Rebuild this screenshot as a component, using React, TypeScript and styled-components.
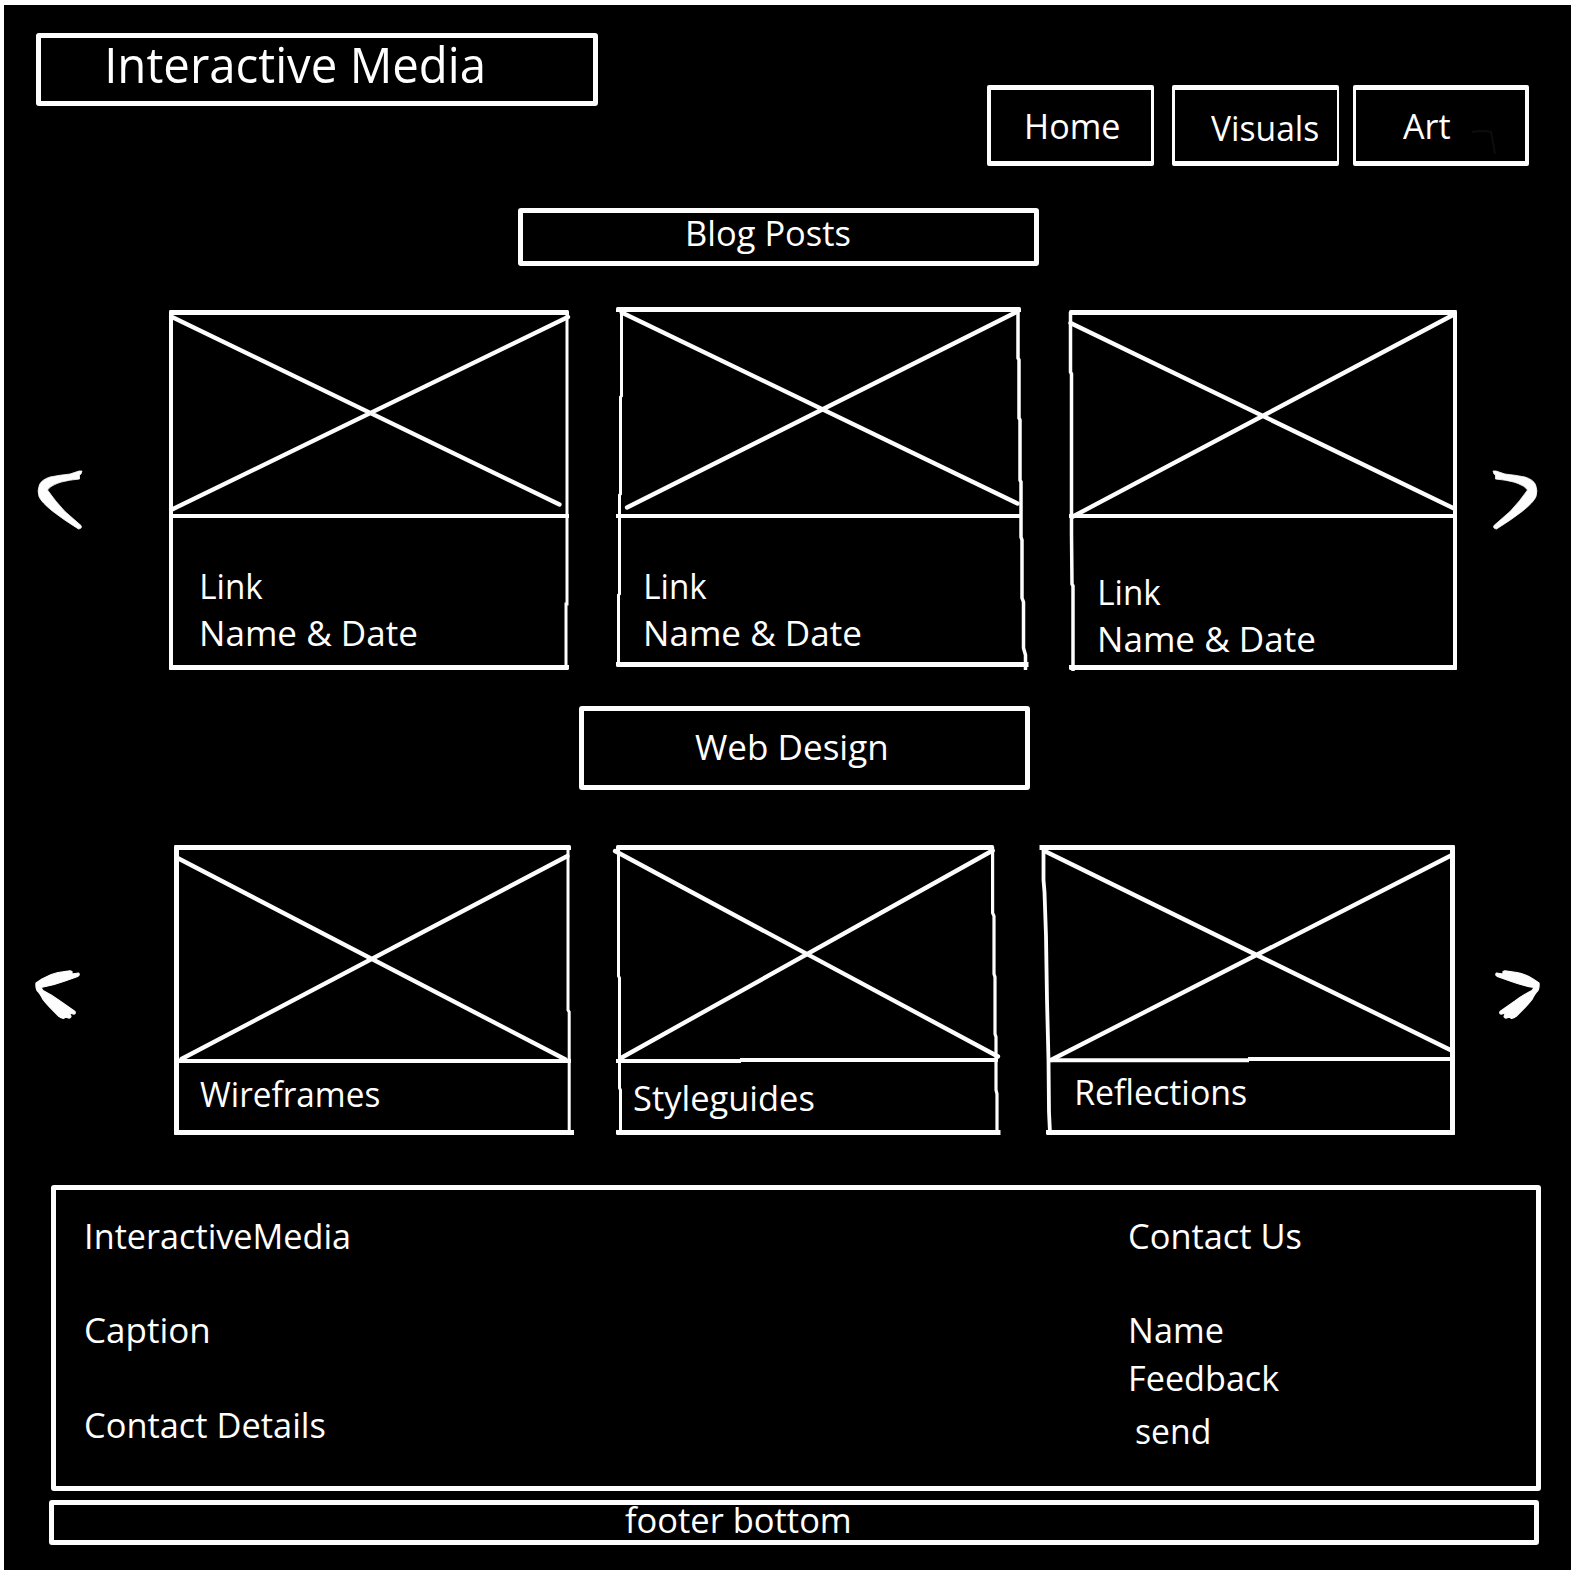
import React, { useLayoutEffect, useState } from 'react';
import styled, { createGlobalStyle } from 'styled-components';

const FONT = '"Open Sans", "Noto Sans", sans-serif';
const INK = '#fdfdfd';

const GlobalStyle = createGlobalStyle`
  *, *::before, *::after { box-sizing: border-box; }
  html, body { margin: 0; background: #fff; }
  body { padding: 5px 4px; }
`;

const Page = styled.main`
  display: flex;
  flex-direction: column;
  width: 1567px;
  height: 1565px;
  background: #000;
  color: #fff;
  font-family: ${FONT};
`;

/* ---------- text ---------- */

const LabelBox = styled.span<{ $width: number; $size: number }>`
  display: block;
  flex: none;
  width: ${(p) => p.$width}px;
  height: ${(p) => p.$size * 1.335}px;
  font-size: ${(p) => p.$size}px;
  line-height: ${(p) => p.$size * 1.335}px;
  white-space: nowrap;
`;

const LabelText = styled.span`
  display: inline-block;
  transform-origin: 0 50%;
`;

type LabelProps = { children: string; width: number; size?: number };

/** One line of lettering condensed so that its ink fills the given width. */
function Label({ children, width, size = 35.5 }: LabelProps) {
  const [transform, setTransform] = useState('none');
  useLayoutEffect(() => {
    const ctx = document.createElement('canvas').getContext('2d');
    if (!ctx) return;
    ctx.font = `${size}px ${FONT}`;
    const m = ctx.measureText(children);
    const scale = width / (m.actualBoundingBoxLeft + m.actualBoundingBoxRight);
    setTransform(`translateX(${m.actualBoundingBoxLeft * scale}px) scaleX(${scale})`);
  }, [children, width, size]);
  return (
    <LabelBox $width={width} $size={size}>
      <LabelText style={{ transform }}>{children}</LabelText>
    </LabelBox>
  );
}

/* ---------- header ---------- */

const Header = styled.header`
  display: flex;
  justify-content: space-between;
  align-items: flex-start;
  height: 203px;
  padding: 28px 42px 0 31.500px;
`;

const Brand = styled.h1`
  display: flex;
  width: 562px;
  height: 73px;
  margin: 0;
  padding: 0 0 0 67px;
  border: 5px solid ${INK};
  border-radius: 3px;
  font-weight: 400;
  & > span { margin-top: -6px; }
`;

const Nav = styled.nav`
  display: flex;
  margin-top: 52px;
`;

const NavItem = styled.a<{ $width: number; $gap?: number; $sides: [number, number]; $pad: [number, number] }>`
  display: flex;
  width: ${(p) => p.$width}px;
  height: 81px;
  margin-left: ${(p) => p.$gap ?? 0}px;
  padding: ${(p) => p.$pad[0]}px 0 0 ${(p) => p.$pad[1]}px;
  border: solid ${INK};
  border-width: 5px ${(p) => p.$sides[1]}px 5px ${(p) => p.$sides[0]}px;
  border-radius: 2px;
  color: inherit;
  text-decoration: none;
`;

const Smudge = styled.svg`
  flex: none;
  overflow: visible;
  fill: none;
  stroke: #0d0d0d;
  stroke-width: 2;
`;

/* ---------- sections ---------- */

const SectionTitle = styled.h2<{ $left: number; $width: number; $height: number; $offset: [number, number] }>`
  display: flex;
  flex: none;
  width: ${(p) => p.$width}px;
  height: ${(p) => p.$height}px;
  margin: 0 0 0 ${(p) => p.$left}px;
  border: 5px solid ${INK};
  border-radius: 3px;
  font-weight: 400;
  & > span { margin: ${(p) => p.$offset[0]}px 0 0 ${(p) => p.$offset[1]}px; }
`;

const Carousel = styled.section<{ $height: number; $top: number; $bottom: number }>`
  display: flex;
  flex: none;
  align-items: flex-start;
  height: ${(p) => p.$height}px;
  margin: ${(p) => p.$top}px 0 ${(p) => p.$bottom}px;
`;

const ArrowButton = styled.button<{ $gap: number; $drop: number; $flip?: boolean }>`
  display: block;
  flex: none;
  margin: ${(p) => p.$drop}px 0 0 ${(p) => p.$gap}px;
  padding: 0;
  border: 0;
  background: none;
  transform: ${(p) => (p.$flip ? 'scaleX(-1)' : 'none')};
  svg { display: block; overflow: visible; fill: ${INK}; stroke: ${INK}; stroke-linejoin: round; }
`;

const CardBox = styled.article<{ $gap: number; $drop: number; $width: number; $sides: [number, number] }>`
  position: relative;
  flex: none;
  width: ${(p) => p.$width}px;
  margin: ${(p) => p.$drop}px 0 0 ${(p) => p.$gap}px;
  border: solid ${INK};
  border-width: 5px ${(p) => p.$sides[1]}px 5px ${(p) => p.$sides[0]}px;
  border-radius: 1.500px;
`;

const Thumb = styled.div<{ $height: number }>`
  height: ${(p) => p.$height}px;
`;

const Caption = styled.div<{ $height: number; $pad: [number, number]; $line: string }>`
  display: flex;
  height: ${(p) => p.$height + 4}px;
  flex-direction: column;
  padding: ${(p) => p.$pad[0]}px 0 0 ${(p) => p.$pad[1]}px;
  border-top: 4px solid ${(p) => p.$line};
`;

/* Pen strokes that cross the card's straight borders. */
const Strokes = styled.svg<{ $left: number; $top: number }>`
  position: absolute;
  left: ${(p) => p.$left}px;
  top: ${(p) => p.$top}px;
  overflow: visible;
  fill: none;
  stroke: ${INK};
  pointer-events: none;
`;

type Stroke = { d: string; w: number };

type CardData = {
  x: number;
  y: number;
  width: number;
  gap: number;
  drop: number;
  sides: [number, number];
  thumb: number;
  caption: number;
  pad: [number, number];
  ownDivider?: boolean;
  lines: { text: string; width: number }[];
  cross: string;
  strokes: Stroke[];
};

const blogCards: CardData[] = [
  {
    x: 169, y: 310, width: 400, gap: 87, drop: 3, sides: [4, 0], thumb: 199, caption: 147, pad: [44, 29],
    lines: [{ text: 'Link', width: 61 }, { text: 'Name & Date', width: 215 }],
    cross: 'M172 317L559.500 504.500M172 509.500L568 317',
    strokes: [{ d: 'M567 312V604L566 604V667', w: 3 }],
  },
  {
    x: 616, y: 307, width: 405, gap: 47, drop: 0, sides: [0, 0], thumb: 202, caption: 144, pad: [44, 29.6],
    lines: [{ text: 'Link', width: 61 }, { text: 'Name & Date', width: 215 }],
    cross: 'M621.700 312.500L1017.500 503.500M627 507.500L1017.500 311.500',
    strokes: [
      { d: 'M621.500 310V396L620.500 397V494L619.500 495V594L618.500 595V665', w: 3 },
      { d: 'M1018 309V358L1019 360V418L1020 420V480L1021 482V537L1022 540V598L1023.500 602V648L1025.500 655V670', w: 3.5 },
      { d: 'M1020 664.500H1028.500', w: 5 },
    ],
  },
  {
    x: 1069, y: 310, width: 388, gap: 48, drop: 3, sides: [0, 4], thumb: 199, caption: 147, pad: [50, 31],
    lines: [{ text: 'Link', width: 61 }, { text: 'Name & Date', width: 215 }],
    cross: 'M1070.500 323L1454 508.500M1072 517L1453 315',
    strokes: [{ d: 'M1070.500 312V372L1071.500 374V534L1072 584L1073 586V671', w: 3.5 }],
  },
];

const designCards: CardData[] = [
  {
    x: 173.5, y: 845, width: 397.5, gap: 93.5, drop: 0, sides: [5, 0], thumb: 209, caption: 67, pad: [6.8, 21],
    lines: [{ text: 'Wireframes', width: 179.4 }],
    cross: 'M177 858L565 1059.500M181 1059L567 856',
    strokes: [
      { d: 'M567.500 848V1010L568.700 1012V1132', w: 3 },
      { d: 'M569 1132.500H573.500', w: 5 },
    ],
  },
  {
    x: 616, y: 845, width: 378, gap: 45, drop: 0, sides: [0, 0], thumb: 209, caption: 67, pad: [10.5, 18.3],
    ownDivider: true,
    lines: [{ text: 'Styleguides', width: 180 }],
    cross: 'M615 851L998 1056.500M621 1058L992.700 850.500',
    strokes: [
      { d: 'M618.500 848V976L619.500 978V1088L620.500 1090V1133', w: 3 },
      { d: 'M992.600 847V913L994 916V974L995 977V1034L996 1037V1090L997 1094V1133', w: 3.2 },
      { d: 'M616 1061H741M740 1060H998', w: 4 },
      { d: 'M992 1132.500H1000.500', w: 5 },
    ],
  },
  {
    x: 1046, y: 845, width: 409, gap: 52, drop: 0, sides: [0, 5], thumb: 209, caption: 67, pad: [4.5, 31.4],
    ownDivider: true,
    lines: [{ text: 'Reflections', width: 169.3 }],
    cross: 'M1044.500 851L1452 1050.700M1051 1060L1452 855',
    strokes: [
      { d: 'M1039.500 847.500H1050', w: 5 },
      { d: 'M1043.500 848V880L1044.500 892L1046 936L1047 1000L1048.500 1060L1049 1112L1050 1133', w: 3.8 },
      { d: 'M1047 1060.200H1249M1248 1059H1452', w: 4 },
    ],
  },
];

function Card({ card }: { card: CardData }) {
  return (
    <CardBox $gap={card.gap} $drop={card.drop} $width={card.width} $sides={card.sides}>
      <Thumb $height={card.thumb} />
      <Caption $height={card.caption} $pad={card.pad} $line={card.ownDivider ? 'transparent' : INK}>
        {card.lines.map((l) => (
          <Label key={l.text} width={l.width}>{l.text}</Label>
        ))}
      </Caption>
      <Strokes
        $left={-card.sides[0]}
        $top={-5}
        width={card.width}
        height={360}
        viewBox={`${card.x} ${card.y} ${card.width} 360`}
      >
        <path d={card.cross} strokeWidth={4.3} strokeLinecap="round" />
        {card.strokes.map((s) => (
          <path key={s.d} d={s.d} strokeWidth={s.w} />
        ))}
      </Strokes>
    </CardBox>
  );
}

const CurvedArrow = () => (
  <svg width={46} height={60} viewBox="36 470 46 60" strokeWidth={0.8}>
    <path d="M82 471L81 474L79.500 475L79.500 479C70 480 62 481.500 57 483.500Q50 486 47.500 490Q55 501 65 511.500L81 525.500Q82.500 528.500 78.500 529Q64 520 53 511.500Q41 502 39 496.500Q37 491 39.500 484.500Q42 479.500 50 477Q60 475 70 474Q76 472 79 471Z" />
  </svg>
);

const FeatherArrow = () => (
  <svg width={45} height={50} viewBox="35 970 45 50" strokeWidth={1.2}>
    <path d="M36 983L42 979Q50 974 58 972.500L70 970.800L72 971.500L72 974L78.500 973Q80.500 975 77 976.800L65 981Q53 985.500 41 987.500L43 990.500Q52 995 60 1001L75 1011.500Q76 1014.500 73 1014L69.500 1013L71 1016.500Q70.500 1019 67 1017.500L65 1017.500L63.500 1018.500Q61 1018.500 58 1015.500Q48 1006 43 999.500Q40 993 37 990.500Q35.500 988 36 983Z" />
  </svg>
);

/* ---------- footer ---------- */

const Footer = styled.footer`
  display: flex;
  flex: none;
  width: 1490px;
  height: 306px;
  margin-left: 47px;
  padding: 22px 0 0 30px;
  border: 5px solid ${INK};
  border-radius: 3px;
`;

const FooterColumn = styled.div<{ $width: number }>`
  display: flex;
  flex-direction: column;
  width: ${(p) => p.$width}px;
`;

const FooterItem = styled.div<{ $gap?: number; $indent?: number }>`
  margin: ${(p) => p.$gap ?? 0}px 0 0 ${(p) => p.$indent ?? 0}px;
`;

const FooterBar = styled.div`
  display: flex;
  flex: none;
  width: 1490px;
  height: 45px;
  margin: 9px 0 0 44.500px;
  padding: 0 0 0 571.500px;
  border: 5px solid ${INK};
  border-radius: 3px;
  & > span { margin-top: -9px; }
`;

export default function App() {
  return (
    <>
      <GlobalStyle />
      <Page>
        <Header>
          <Brand>
            <Label width={375} size={49}>Interactive Media</Label>
          </Brand>
          <Nav>
            <NavItem href="#home" $width={167} $sides={[4.5, 3.5]} $pad={[12, 36]}>
              <Label width={92.5}>Home</Label>
            </NavItem>
            <NavItem href="#visuals" $gap={18.5} $width={166.500} $sides={[3, 2]} $pad={[13.600, 35.500]}>
              <Label width={107.5}>Visuals</Label>
            </NavItem>
            <NavItem href="#art" $gap={14.500} $width={176} $sides={[3, 4]} $pad={[12, 47]}>
              <Label width={47}>Art</Label>
              <Smudge width={30} height={60} viewBox="0 0 30 60">
                <path d="M22 30Q34 28 41 30Q43 40 45 52" />
              </Smudge>
            </NavItem>
          </Nav>
        </Header>

        <SectionTitle $left={513.500} $width={521} $height={58} $offset={[-4, 165]}>
          <Label width={162}>Blog Posts</Label>
        </SectionTitle>
        <Carousel $height={363} $top={41} $bottom={36}>
          <ArrowButton $gap={32} $drop={163} aria-label="Previous posts"><CurvedArrow /></ArrowButton>
          {blogCards.map((c) => <Card key={c.x} card={c} />)}
          <ArrowButton $gap={36} $drop={163} $flip aria-label="Next posts"><CurvedArrow /></ArrowButton>
        </Carousel>

        <SectionTitle $left={574.500} $width={451} $height={84} $offset={[11.500, 111.500]}>
          <Label width={191}>Web Design</Label>
        </SectionTitle>
        <Carousel $height={290} $top={55} $bottom={50}>
          <ArrowButton $gap={31} $drop={125} aria-label="Previous designs"><FeatherArrow /></ArrowButton>
          {designCards.map((c) => <Card key={c.x} card={c} />)}
          <ArrowButton $gap={40} $drop={125} $flip aria-label="Next designs"><FeatherArrow /></ArrowButton>
        </Carousel>

        <Footer>
          <FooterColumn $width={1044.300}>
            <FooterItem $indent={1}><Label width={261.500}>InteractiveMedia</Label></FooterItem>
            <FooterItem $gap={47}><Label width={122}>Caption</Label></FooterItem>
            <FooterItem $gap={47.600}><Label width={239}>Contact Details</Label></FooterItem>
          </FooterColumn>
          <FooterColumn $width={300}>
            <FooterItem><Label width={171}>Contact Us</Label></FooterItem>
            <FooterItem $gap={47} $indent={1}><Label width={92}>Name</Label></FooterItem>
            <FooterItem $indent={1}><Label width={148.500}>Feedback</Label></FooterItem>
            <FooterItem $gap={5.600} $indent={5.500}><Label width={72.700}>send</Label></FooterItem>
          </FooterColumn>
        </Footer>
        <FooterBar>
          <Label width={224}>footer bottom</Label>
        </FooterBar>
      </Page>
    </>
  );
}
